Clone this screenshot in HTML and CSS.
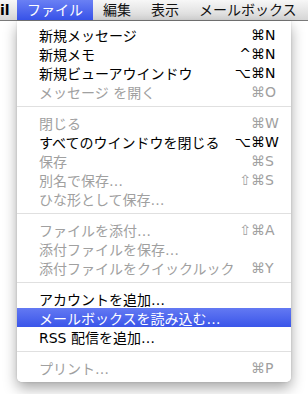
FILE: index.html
```html
<!DOCTYPE html>
<html lang="ja">
<head>
    <meta charset="UTF-8">
    <title>ファイル メニュー</title>
    <link rel="stylesheet" href="styles.css">
</head>
<body>
    <div class="menubar">
        <span class="bar-app">il</span>
        <span class="bar-item active">ファイル</span>
        <span class="bar-item">編集</span>
        <span class="bar-item">表示</span>
        <span class="bar-item">メールボックス</span>
    </div>

    <div class="menu">
        <div class="item"><span class="label">新規メッセージ</span><span class="keys"><span class="mods">⌘</span><span class="key">N</span></span></div>
        <div class="item"><span class="label">新規メモ</span><span class="keys"><span class="mods">^⌘</span><span class="key">N</span></span></div>
        <div class="item"><span class="label">新規ビューアウインドウ</span><span class="keys"><span class="mods">⌥⌘</span><span class="key">N</span></span></div>
        <div class="item disabled"><span class="label">メッセージ を開く</span><span class="keys"><span class="mods">⌘</span><span class="key">O</span></span></div>
        <div class="sep"></div>
        <div class="item disabled"><span class="label">閉じる</span><span class="keys"><span class="mods">⌘</span><span class="key">W</span></span></div>
        <div class="item"><span class="label">すべてのウインドウを閉じる</span><span class="keys"><span class="mods">⌥⌘</span><span class="key">W</span></span></div>
        <div class="item disabled"><span class="label">保存</span><span class="keys"><span class="mods">⌘</span><span class="key">S</span></span></div>
        <div class="item disabled"><span class="label">別名で保存…</span><span class="keys"><span class="mods">⇧⌘</span><span class="key">S</span></span></div>
        <div class="item disabled"><span class="label">ひな形として保存…</span></div>
        <div class="sep"></div>
        <div class="item disabled"><span class="label">ファイルを添付…</span><span class="keys"><span class="mods">⇧⌘</span><span class="key">A</span></span></div>
        <div class="item disabled"><span class="label">添付ファイルを保存…</span></div>
        <div class="item disabled"><span class="label">添付ファイルをクイックルック</span><span class="keys"><span class="mods">⌘</span><span class="key">Y</span></span></div>
        <div class="sep"></div>
        <div class="item"><span class="label">アカウントを追加…</span></div>
        <div class="item selected"><span class="label">メールボックスを読み込む…</span></div>
        <div class="item"><span class="label">RSS 配信を追加…</span></div>
        <div class="sep"></div>
        <div class="item disabled"><span class="label">プリント…</span><span class="keys"><span class="mods">⌘</span><span class="key">P</span></span></div>
    </div>
</body>
</html>
```

FILE: styles.css
```css
* {
    box-sizing: border-box;
    margin: 0;
    padding: 0;
}

body {
    width: 308px;
    height: 394px;
    overflow: hidden;
    background-color: #fff;
    color: #000;
    font-family: "DejaVu Sans", "Noto Sans CJK JP", sans-serif;
    font-size: 14px;
}

/* Menu bar */
.menubar {
    display: flex;
    height: 21px;
    background: linear-gradient(#f7f7f7, #d6d6d6);
    border-bottom: 1px solid #7a7a7a;
    white-space: nowrap;
}

.bar-app {
    width: 17px;
    padding-left: 0;
    font-weight: bold;
    line-height: 20px;
    overflow: hidden;
}

.bar-item {
    padding: 0 10px;
    line-height: 20px;
    color: #111;
}

.bar-item.active {
    color: #fff;
    background: linear-gradient(#6a80f4, #3752e8);
}

/* Dropdown */
.menu {
    width: 274px;
    margin-left: 17px;
    padding: 4px 0 5px;
    background-color: rgba(255, 255, 255, 0.97);
    border-radius: 0 0 5px 5px;
    box-shadow: 0 6px 14px rgba(0, 0, 0, 0.35), 0 0 2px rgba(0, 0, 0, 0.15);
}

.item {
    display: flex;
    align-items: center;
    height: 19px;
    padding: 0 13px 0 22px;
    white-space: nowrap;
}

.label {
    flex: 1;
}

.keys {
    display: flex;
}

.mods {
    text-align: right;
}

.key {
    width: 13px;
    text-align: left;
}

.item.disabled {
    color: #a0a0a0;
}

.item.selected {
    color: #fff;
    background: linear-gradient(#6379f3, #3a55e9);
}

.sep {
    height: 1px;
    margin: 5px 0 6px;
    background-color: #e0e0e0;
}
```
